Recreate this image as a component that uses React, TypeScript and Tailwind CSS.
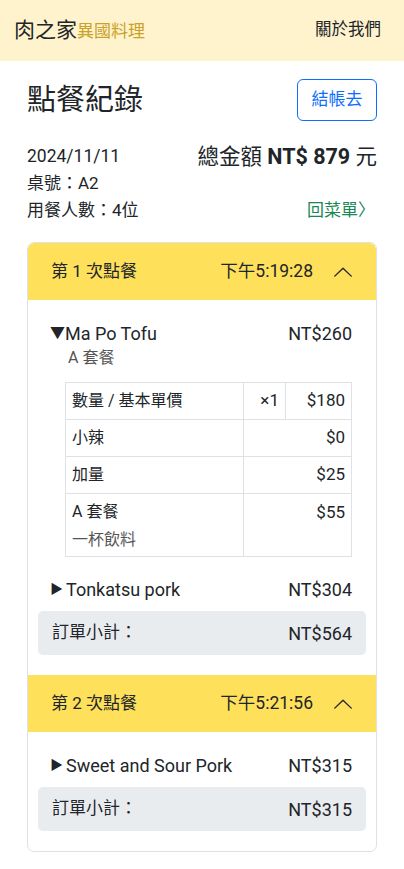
import React from 'react';

const FONT = { fontFamily: 'Roboto, "Noto Sans CJK TC", sans-serif' };

type Extra = { label: string; sub?: string; price: string };
type Item = { name: string; price: string; open?: boolean; plan?: string; qty?: string; base?: string; extras?: Extra[] };
type Round = { no: number; time: string; items: Item[]; subtotal: string };

const ROUNDS: Round[] = [
	{
		no: 1,
		time: '下午5:19:28',
		subtotal: 'NT$564',
		items: [
			{
				name: 'Ma Po Tofu',
				price: 'NT$260',
				open: true,
				plan: 'A 套餐',
				qty: '×1',
				base: '$180',
				extras: [
					{ label: '小辣', price: '$0' },
					{ label: '加量', price: '$25' },
					{ label: 'A 套餐', sub: '一杯飲料', price: '$55' },
				],
			},
			{ name: 'Tonkatsu pork', price: 'NT$304' },
		],
	},
	{
		no: 2,
		time: '下午5:21:56',
		subtotal: 'NT$315',
		items: [{ name: 'Sweet and Sour Pork', price: 'NT$315' }],
	},
];

const ChevronUp = () => (
	<svg width="22" height="22" viewBox="0 0 24 24" fill="none" stroke="#212529" strokeWidth="1.5" strokeLinecap="round" strokeLinejoin="round">
		<path d="M3 16.5 12 8l9 8.5" />
	</svg>
);

const ItemRow = ({ item }: { item: Item }) => (
	<div>
		<div className="flex items-center justify-between h-[34px] pl-[12px] pr-[14px] text-[18px] text-[#212529]">
			<span className="flex items-center">
				<span className={item.open ? 'text-[15px]' : 'text-[13px] mr-[3px]'}>{item.open ? '▼' : '▶'}</span>
				{item.name}
			</span>
			<span>{item.price}</span>
		</div>
		{item.open && (
			<div className="pl-[27px] pr-[14px]">
				<div className="-mt-[4px] text-[16px] text-[#555] h-[24px] leading-[24px] pl-[3px]">{item.plan}</div>
				<table className="w-full mt-[12px] mb-[15px] border-collapse text-[17px] text-[#212529]">
					<tbody>
						<tr className="h-[37px]">
							<td className="border border-[#dee2e6] px-[6px] w-[178px] text-[16px]">數量 / 基本單價</td>
							<td className="border border-[#dee2e6] px-[6px] text-right w-[42px]">{item.qty}</td>
							<td className="border border-[#dee2e6] px-[6px] text-right">{item.base}</td>
						</tr>
						{item.extras?.map((ex) => (
							<tr key={ex.label + ex.price} className={ex.sub ? 'h-[63px] align-top' : 'h-[37px]'}>
								<td className={`border border-[#dee2e6] px-[6px] text-[16px] ${ex.sub ? 'pt-[6px]' : ''}`}>
									<div>{ex.label}</div>
									{ex.sub && <div className="text-[#555] mt-[4px]">{ex.sub}</div>}
								</td>
								<td colSpan={2} className={`border border-[#dee2e6] px-[6px] text-right ${ex.sub ? 'pt-[6px]' : ''}`}>
									{ex.price}
								</td>
							</tr>
						))}
					</tbody>
				</table>
			</div>
		)}
	</div>
);

const RoundBlock = ({ round, first }: { round: Round; first: boolean }) => (
	<section>
		<div className={`flex items-center h-[57px] bg-[#ffe05a] pl-[23px] pr-[22px] text-[17px] text-[#212529] ${first ? 'rounded-t-[6px]' : ''}`}>
			<span className="flex-1">第 {round.no} 次點餐</span>
			<span className="text-[17.5px] mr-[19px]">{round.time}</span>
			<ChevronUp />
		</div>
		<div className="pt-[16px] pb-[20px] px-[10px]">
			{round.items.map((it) => (
				<ItemRow key={it.name} item={it} />
			))}
			<div className="mt-[5px] flex items-center justify-between h-[44px] rounded-[5px] bg-[#e9ecef] px-[14px] text-[17px] text-[#212529]">
				<span>訂單小計：</span>
				<span className="text-[18px]">{round.subtotal}</span>
			</div>
		</div>
	</section>
);

export default function App() {
	return (
		<div className="w-[404px] min-h-[869px] bg-white" style={FONT}>
			<header className="flex items-center justify-between h-[61px] bg-[#fff3cd] pl-[14px] pr-[23px]">
				<div className="flex items-baseline">
					<span className="text-[21px] text-[#212529]">肉之家</span>
					<span className="text-[17px] text-[#c9a227]">異國料理</span>
				</div>
				<span className="text-[16.5px] text-[#212529]">關於我們</span>
			</header>

			<main className="px-[27px]">
				<div className="flex items-center justify-between mt-[18px]">
					<h1 className="text-[29px] text-[#212529] leading-[36px]">點餐紀錄</h1>
					<button className="w-[80px] h-[42px] rounded-[6px] border border-[#0d6efd] text-[#0d6efd] text-[17px]">結帳去</button>
				</div>

				<div className="mt-[22px] text-[17px] text-[#212529] leading-[27px]">
					<div className="flex items-center justify-between">
						<span className="text-[17.5px]">2024/11/11</span>
						<span className="text-[21.5px]">
							總金額 <b className="font-bold">NT$ 879</b> 元
						</span>
					</div>
					<div>桌號：A2</div>
					<div className="flex items-center justify-between">
						<span>用餐人數：4位</span>
						<span className="text-[#198754] mr-[2px]">回菜單〉</span>
					</div>
				</div>

				<div className="mt-[18px] border border-[#dee2e6] rounded-[7px] overflow-hidden">
					{ROUNDS.map((r, i) => (
						<RoundBlock key={r.no} round={r} first={i === 0} />
					))}
				</div>
			</main>
		</div>
	);
}
